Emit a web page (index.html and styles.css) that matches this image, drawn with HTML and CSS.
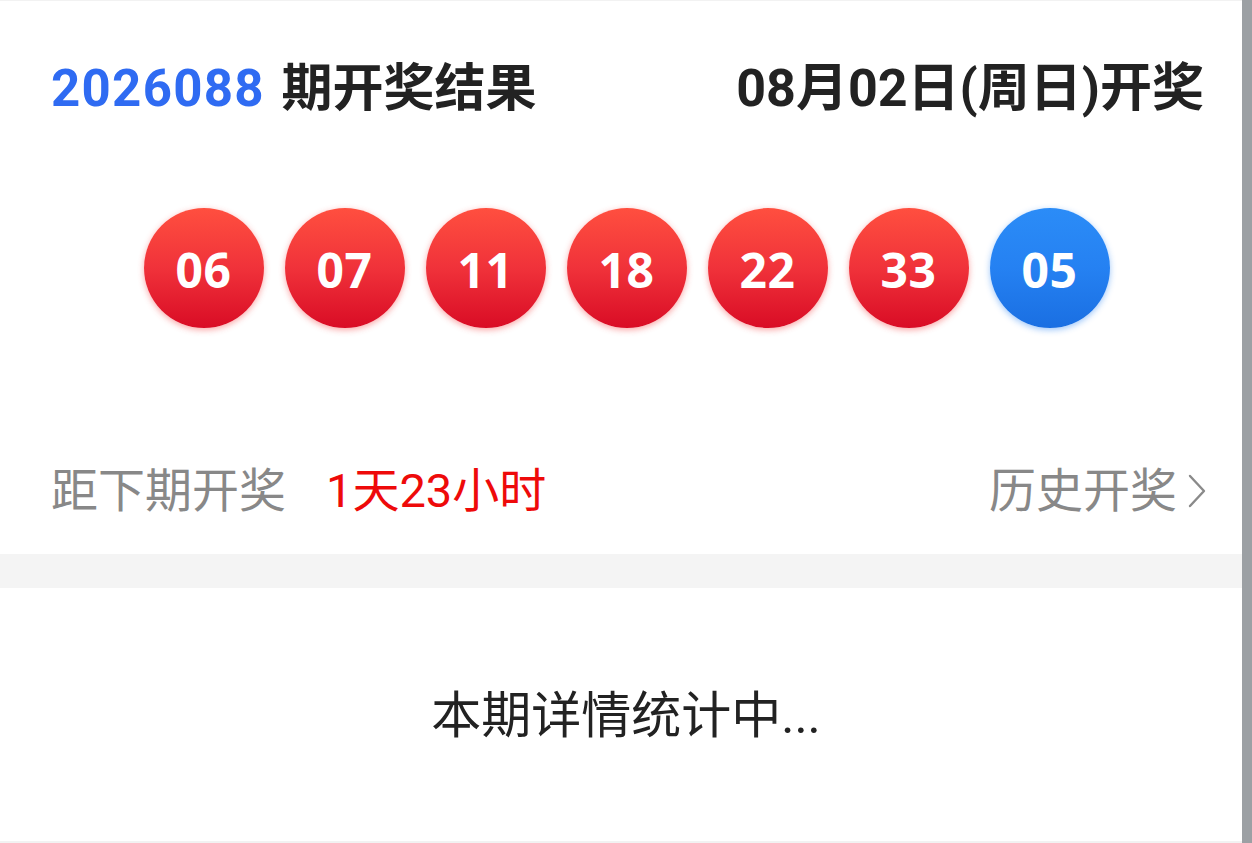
FILE: index.html
```html
<!DOCTYPE html>
<html lang="zh-CN">
<head>
<meta charset="utf-8">
<title>开奖结果</title>
<link rel="stylesheet" href="styles.css">
</head>
<body>
<div class="page">
  <section class="result">
    <div class="title-row">
      <div class="title-left"><span class="issue">2026088</span> 期开奖结果</div>
      <div class="title-right">08月02日(周日)开奖</div>
    </div>
    <div class="balls">
      <span class="ball red">06</span>
      <span class="ball red">07</span>
      <span class="ball red">11</span>
      <span class="ball red">18</span>
      <span class="ball red">22</span>
      <span class="ball red">33</span>
      <span class="ball blue">05</span>
    </div>
    <div class="info-row">
      <div class="countdown"><span class="label">距下期开奖</span><span class="time">1天23小时</span></div>
      <div class="history">历史开奖<svg class="chev" viewBox="0 0 20 36" width="20" height="36"><path d="M3 3 L17 18 L3 33" fill="none" stroke="#8a8a8a" stroke-width="2.4" stroke-linecap="round" stroke-linejoin="round"/></svg></div>
    </div>
  </section>
  <div class="band"></div>
  <section class="detail">
    <p class="detail-text">本期详情统计中...</p>
  </section>
</div>
<div class="scrollbar"></div>
</body>
</html>
```
FILE: styles.css
```css
html, body {
  margin: 0;
  padding: 0;
  background: #ffffff;
}
body {
  font-family: "Roboto", "Noto Sans CJK SC", sans-serif;
  color: #222222;
}
.page {
  border-top: 1px solid #f2f2f2;
}
.result {
  padding: 0 48px 0 51px;
}
.title-row {
  display: flex;
  justify-content: space-between;
  align-items: center;
  margin-top: 62px;
  height: 52px;
  font-size: 52px;
  line-height: 52px;
  font-weight: 700;
  color: #222222;
}
.title-left {
  font-size: 51px;
}
.issue {
  color: #2f6bf2;
  letter-spacing: 1.3px;
  margin-right: 4px;
}
.balls {
  display: flex;
  justify-content: center;
  gap: 21px;
  margin-top: 93px;
  padding-right: 2px;
}
.ball {
  width: 120px;
  height: 120px;
  border-radius: 50%;
  display: flex;
  align-items: center;
  justify-content: center;
  color: #ffffff;
  font-family: "Noto Sans", "Open Sans", sans-serif;
  font-weight: 700;
  font-size: 48px;
  letter-spacing: 0.5px;
  padding-top: 2px;
  box-sizing: border-box;
}
.ball.red {
  background: linear-gradient(180deg, #ff4f3f 0%, #f0323a 50%, #d90c25 100%);
  box-shadow: 0 2px 6px rgba(245, 60, 60, 0.45);
}
.ball.blue {
  background: linear-gradient(180deg, #2b8cf7 0%, #2581f2 50%, #1a6fe2 100%);
  box-shadow: 0 2px 6px rgba(40, 130, 245, 0.45);
}
.info-row {
  display: flex;
  justify-content: space-between;
  align-items: center;
  margin-top: 139px;
  height: 48px;
  font-size: 47px;
  line-height: 48px;
  color: #888888;
  padding-bottom: 39px;
}
.countdown {
  display: flex;
  align-items: center;
}
.time {
  color: #ee0a0a;
  margin-left: 40px;
}
.history {
  display: flex;
  align-items: center;
  margin-right: -3px;
}
.chev {
  margin-left: 10px;
}
.band {
  height: 34px;
  background: #f4f4f4;
}
.detail {
  height: 253px;
  display: flex;
  align-items: center;
  justify-content: center;
  border-bottom: 2px solid #f2f2f2;
}
.detail-text {
  margin: 0;
  font-size: 50px;
  line-height: 50px;
  color: #222222;
  padding-top: 2px;
}
.scrollbar {
  position: fixed;
  top: 0;
  right: 0;
  width: 10px;
  height: 100%;
  background: #9ca0a4;
}
```
